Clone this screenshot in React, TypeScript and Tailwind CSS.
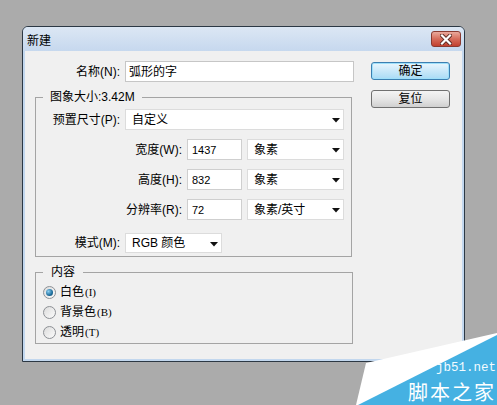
import React from "react";

const font = "font-['Liberation_Sans','Noto_Sans_CJK_SC',sans-serif]";

function Arrow() {
  return (
    <svg width="8" height="5" viewBox="0 0 8 5">
      <polygon points="0,0 8,0 4,4.5" fill="#111" />
    </svg>
  );
}

function Dropdown({ w, h = 21, text }: { w: string; h?: number; text: string }) {
  return (
    <div
      className={`flex ${w} items-center justify-between border border-[#dcdcdc] bg-white pl-[6px] pr-[3px]`}
      style={{ height: h }}
    >
      <span>{text}</span>
      <span className="pt-[2px]">
        <Arrow />
      </span>
    </div>
  );
}

function NumBox({ value }: { value: string }) {
  return (
    <div className="flex h-[21px] w-[55px] items-start border border-[#cfcfcf] bg-white pl-[4px] pt-[2px] text-[11px]">
      {value}
    </div>
  );
}

function Radio({ checked, label, key2 }: { checked?: boolean; label: string; key2: string }) {
  return (
    <div className="flex h-[20px] items-center">
      <div className="ml-[7px] flex h-[13px] w-[13px] items-center justify-center rounded-full border border-[#8d9095] bg-gradient-to-br from-[#dcdcdc] to-[#fbfbfb]">
        {checked && (
          <div className="h-[7px] w-[7px] rounded-full bg-[radial-gradient(circle_at_35%_35%,#8cd0f2,#1d6d9c_60%,#0d4463)]" />
        )}
      </div>
      <span className="ml-[4px]">{label}</span>
      <span className="ml-[1px] font-['Liberation_Serif',serif] text-[11px]">({key2})</span>
    </div>
  );
}

function CloseButton() {
  return (
    <div className="flex h-[16px] w-[30px] items-center justify-center rounded-[3px] border border-[#8a3a30] bg-gradient-to-b from-[#e9a99c] via-[#d56b5a] to-[#c2402f]">
      <svg width="12" height="11" viewBox="0 0 12 11">
        <path d="M2 1.5 L10 9.5 M10 1.5 L2 9.5" stroke="#5c2a22" strokeWidth="4" strokeLinecap="square" />
        <path d="M2 1.5 L10 9.5 M10 1.5 L2 9.5" stroke="#ffffff" strokeWidth="2.2" strokeLinecap="square" />
      </svg>
    </div>
  );
}

export default function App() {
  return (
    <div className={`relative h-[405px] w-[497px] overflow-hidden bg-[#ababab] pl-[22px] pt-[26px] text-[12px] text-black ${font}`}>
      <div className="flex h-[336px] w-[443px] flex-col rounded-t-[6px] border border-[#2c3844] bg-[#c2d7ee]">
        <div className="flex h-[24px] items-center justify-between rounded-t-[5px] bg-gradient-to-b from-[#dce7f4] to-[#c6d8ee] pl-[4px] pr-[3px]">
          <span className="pt-[3px]">新建</span>
          <CloseButton />
        </div>

        <div className="mx-[2px] mb-[2px] flex flex-1 items-start gap-[17px] bg-[#f0f0f0] pl-[10px] pt-[10px]">
          {/* left column */}
          <div className="flex w-[319px] flex-col">
            <div className="flex h-[21px] items-center">
              <span className="w-[85px] text-right">名称(N):</span>
              <div className="ml-[5px] flex h-[21px] w-[229px] items-center border border-[#c6c6c6] bg-white pl-[3px]">
                弧形的字
              </div>
            </div>

            <fieldset className="mt-[8px] w-[317px] border border-[#a4a4a4] pb-[3px] pt-[5px]">
              <legend className="ml-[7px] px-[7px] leading-[14px]">图象大小:3.42M</legend>
              <div className="flex flex-col gap-[9px]">
                <div className="flex items-center">
                  <span className="w-[84px] text-right">预置尺寸(P):</span>
                  <div className="ml-[5px]">
                    <Dropdown w="w-[219px]" text="自定义" />
                  </div>
                </div>
                <div className="flex items-center">
                  <span className="w-[146px] text-right">宽度(W):</span>
                  <div className="ml-[5px] flex gap-[5px]">
                    <NumBox value="1437" />
                    <Dropdown w="w-[97px]" text="象素" />
                  </div>
                </div>
                <div className="flex items-center">
                  <span className="w-[146px] text-right">高度(H):</span>
                  <div className="ml-[5px] flex gap-[5px]">
                    <NumBox value="832" />
                    <Dropdown w="w-[97px]" text="象素" />
                  </div>
                </div>
                <div className="flex items-center">
                  <span className="w-[146px] text-right">分辨率(R):</span>
                  <div className="ml-[5px] flex gap-[5px]">
                    <NumBox value="72" />
                    <Dropdown w="w-[97px]" text="象素/英寸" />
                  </div>
                </div>
              </div>
              <div className="mt-[13px] flex items-center">
                <span className="w-[84px] text-right">模式(M):</span>
                <div className="ml-[5px]">
                  <Dropdown w="w-[97px]" h={20} text="RGB 颜色" />
                </div>
              </div>
            </fieldset>

            <fieldset className="mt-[8px] w-[318px] border border-[#a4a4a4] pb-[1px] pt-[3px]">
              <legend className="ml-[7px] px-[8px] leading-[14px]">内容</legend>
              <Radio checked label="白色" key2="I" />
              <Radio label="背景色" key2="B" />
              <Radio label="透明" key2="T" />
            </fieldset>
          </div>

          {/* right column */}
          <div className="mt-[1px] flex flex-col gap-[10px]">
            <button className="flex h-[18px] w-[79px] items-center justify-center rounded-[3px] border border-[#3c7fb1] bg-gradient-to-b from-[#eaf6fd] via-[#c9e8f9] to-[#a9dbf6] shadow-[inset_0_0_0_1px_#9fe0fa]">
              确定
            </button>
            <button className="flex h-[18px] w-[79px] items-center justify-center rounded-[3px] border border-[#707070] bg-gradient-to-b from-[#f4f4f4] via-[#e6e6e6] to-[#d0d0d0]">
              复位
            </button>
          </div>
        </div>
      </div>

      {/* watermark */}
      <svg className="absolute left-[340px] top-[330px]" width="157" height="75" viewBox="340 330 157 75">
        <polygon points="356,405 366,363 497,333 497,405" fill="#ffffff" />
        <polygon points="358,405 497,335 497,405" fill="#45b1e2" />
      </svg>
      <span className="absolute right-[1px] top-[362px] block font-['Liberation_Mono',monospace] text-[12.5px] leading-[13px] text-[#f2fbff]">
        jb51.net
      </span>
      <span className="absolute right-[1px] top-[382px] block font-['Noto_Sans_CJK_SC',sans-serif] text-[20px] leading-[20px] tracking-[2px] text-white">
        脚本之家
      </span>
    </div>
  );
}
